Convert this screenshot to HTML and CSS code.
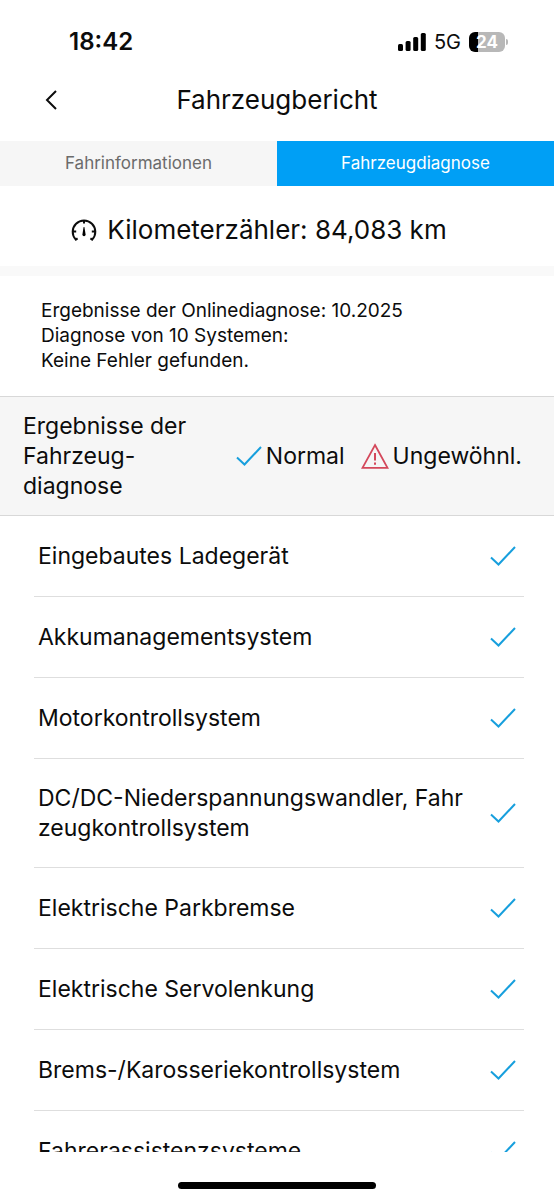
FILE: index.html
```html
<!DOCTYPE html>
<html lang="de">
<head>
<meta charset="utf-8">
<meta name="viewport" content="width=device-width, initial-scale=1">
<title>Fahrzeugbericht</title>
<link rel="stylesheet" href="styles.css">
</head>
<body>
<svg class="sprite" aria-hidden="true">
  <symbol id="check" viewBox="0 0 26 20"><path d="M1 11.5 8.5 18.5 25 1" fill="none" stroke="currentColor" stroke-width="2"/></symbol>
</svg>
<div class="status">
  <span class="clock">18:42</span>
  <div class="indicators">
    <svg class="signal" viewBox="0 0 28 18" aria-hidden="true"><rect x="0" y="11" width="5" height="7" rx="1.5"/><rect x="7.6" y="8" width="5" height="10" rx="1.5"/><rect x="15.2" y="4" width="5" height="14" rx="1.5"/><rect x="22.8" y="0" width="5" height="18" rx="1.5"/></svg>
    <span class="network">5G</span>
    <span class="battery">24</span>
  </div>
</div>
<header class="header">
  <button class="back" type="button" aria-label="Zurück"><svg viewBox="0 0 12 20" aria-hidden="true"><path d="M11 1 2 10l9 9" fill="none" stroke="currentColor" stroke-width="2"/></svg></button>
  <h1 class="title">Fahrzeugbericht</h1>
</header>
<nav class="tabs">
  <a class="tab" href="#fahrinformationen">Fahrinformationen</a>
  <a class="tab tab-active" href="#fahrzeugdiagnose" aria-current="page">Fahrzeugdiagnose</a>
</nav>
<main class="content" id="fahrzeugdiagnose">
  <div class="odometer">
    <svg class="gauge" viewBox="0 0 26 24" aria-hidden="true"><path d="M6.6 20.4 4.8 21.6A11.3 11.3 0 1 1 21.2 21.6L19.4 20.4M13 2V5.4M2 13.5H5.2M20.8 13.5H24" fill="none" stroke="currentColor" stroke-width="2"/><path d="M12.6 9h.8l1.2 7.6a1.6 1.6 0 1 1-3.2 0z"/></svg>
    <span>Kilometerzähler: 84,083 km</span>
  </div>
  <p class="summary">Ergebnisse der Onlinediagnose: 10.2025<br>Diagnose von 10 Systemen:<br>Keine Fehler gefunden.</p>
  <div class="legend">
    <h2 class="legend-title">Ergebnisse der<br>Fahrzeug-<br>diagnose</h2>
    <div class="legend-keys">
      <span class="key"><svg class="check" aria-hidden="true"><use href="#check"/></svg>Normal</span>
      <span class="key"><svg class="warning" viewBox="0 0 28 26" aria-hidden="true"><path d="M14 2 26.5 24.8H1.5Z" fill="none" stroke="currentColor" stroke-width="1.8"/><path d="M14 10v7.5M14 19.5v2.2" stroke="currentColor" stroke-width="2"/></svg>Ungewöhnl.</span>
    </div>
  </div>
  <ul class="results">
    <li class="result"><span>Eingebautes Ladegerät</span><svg class="check" role="img" aria-label="Normal"><use href="#check"/></svg></li>
    <li class="result"><span>Akkumanagementsystem</span><svg class="check" role="img" aria-label="Normal"><use href="#check"/></svg></li>
    <li class="result"><span>Motorkontrollsystem</span><svg class="check" role="img" aria-label="Normal"><use href="#check"/></svg></li>
    <li class="result"><span>DC/DC-Niederspannungswandler, Fahr<wbr>zeugkontrollsystem</span><svg class="check" role="img" aria-label="Normal"><use href="#check"/></svg></li>
    <li class="result"><span>Elektrische Parkbremse</span><svg class="check" role="img" aria-label="Normal"><use href="#check"/></svg></li>
    <li class="result"><span>Elektrische Servolenkung</span><svg class="check" role="img" aria-label="Normal"><use href="#check"/></svg></li>
    <li class="result"><span>Brems-/Karosseriekontrollsystem</span><svg class="check" role="img" aria-label="Normal"><use href="#check"/></svg></li>
    <li class="result"><span>Fahrerassistenzsysteme</span><svg class="check" role="img" aria-label="Normal"><use href="#check"/></svg></li>
  </ul>
</main>
<footer class="home"><span class="home-bar"></span></footer>
</body>
</html>
```
FILE: styles.css
```css
* { box-sizing: border-box; }

body {
  margin: 0;
  height: 100vh;
  display: flex;
  flex-direction: column;
  background: #fff;
  color: #0c0c0c;
  font-family: Inter, "Liberation Sans", sans-serif;
  font-size: 23px;
  line-height: 30px;
}

h1, h2, p, ul { margin: 0; padding: 0; font-weight: 400; }

.sprite { position: absolute; width: 0; height: 0; }

.status {
  display: flex;
  justify-content: space-between;
  align-items: center;
  padding: 27px 49px 0 69px;
}
.clock { font-size: 24px; font-weight: 600; }
.indicators { display: flex; align-items: center; gap: 8px; }
.signal { width: 28px; height: 18px; }
.network { font-size: 20px; }
.battery {
  position: relative;
  width: 36px;
  height: 20px;
  border-radius: 6px;
  background: linear-gradient(90deg, #000 24%, #b8b8b8 24%);
  color: #fff;
  font-size: 17px;
  font-weight: 700;
  line-height: 20px;
  text-align: center;
}
.battery::after {
  content: "";
  position: absolute;
  left: 100%;
  top: 7px;
  width: 2px;
  height: 6px;
  margin-left: 1px;
  border-radius: 0 2px 2px 0;
  background: #b8b8b8;
}

.header {
  display: grid;
  grid-template-columns: 60px 1fr 60px;
  align-items: center;
  padding: 28px 0 26px;
}
.back {
  justify-self: end;
  display: flex;
  padding: 0 3px;
  border: 0;
  background: none;
  color: inherit;
}
.back svg { width: 12px; height: 20px; }
.title { font-size: 26px; line-height: 30px; text-align: center; }

.tabs { display: flex; }
.tab {
  flex: 1;
  padding: 7px 0 8px;
  background: #f6f6f6;
  color: #6b6b6b;
  font-size: 17px;
  text-align: center;
  text-decoration: none;
}
.tab-active { background: #009ff5; color: #fff; }

.content {
  flex: 1;
  min-height: 0;
  overflow-y: auto;
  scrollbar-width: none;
}

.odometer {
  display: flex;
  align-items: center;
  justify-content: center;
  gap: 10px;
  padding: 29px 36px 21px 0;
  border-bottom: 10px solid #f9f9f9;
  font-size: 26px;
}
.gauge { width: 26px; height: 24px; }

.summary {
  padding: 22px 41px 23px;
  font-size: 19px;
  line-height: 25px;
}

.legend {
  display: flex;
  justify-content: space-between;
  align-items: center;
  padding: 14px 32px 14px 23px;
  border-top: 1px solid #d8d8d8;
  border-bottom: 1px solid #d8d8d8;
  background: #f6f6f6;
}
.legend-title { font-size: 23px; }
.legend-keys { display: flex; gap: 16px; }
.key { display: flex; align-items: center; gap: 4px; }

.check { flex: none; width: 26px; height: 20px; color: #179fdd; }
.warning { width: 28px; height: 26px; color: #d4485b; }

.results { padding: 0 30px 0 34px; list-style: none; }
.result {
  display: flex;
  align-items: center;
  justify-content: space-between;
  gap: 14px;
  min-height: 81px;
  padding: 24px 8px 24px 4px;
  border-bottom: 1px solid #dedede;
}

.home { display: flex; justify-content: center; padding: 30px 0 11px; }
.home-bar { width: 198px; height: 7px; border-radius: 4px; background: #000; }
```
